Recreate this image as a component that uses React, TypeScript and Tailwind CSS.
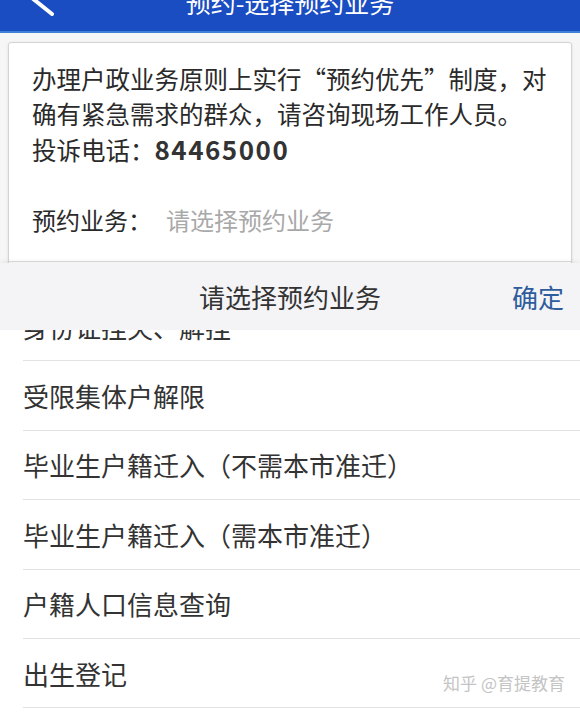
const items = [
  '身份证挂失、解挂',
  '受限集体户解限',
  '毕业生户籍迁入（不需本市准迁）',
  '毕业生户籍迁入（需本市准迁）',
  '户籍人口信息查询',
  '出生登记',
]

const App = () => (
  <div
    className="relative w-[580px] h-[712px] overflow-hidden bg-[#f6f6f6] text-[#2a2a2a]"
    style={{ fontFamily: '"Noto Sans CJK SC", "Noto Sans", sans-serif' }}
  >
    {/* top bar */}
    <header className="relative h-[33px] overflow-hidden bg-[#1a4cc2] border-b-2 border-[#3f7fd6]">
      <svg className="absolute left-[24px] top-[-20px]" width="36" height="38" viewBox="0 0 36 38">
        <path d="M28 2 L8 18 L28 34" stroke="white" strokeWidth="4" fill="none" strokeLinecap="round" />
      </svg>
      <div className="-mt-[14px] text-center text-[25px] leading-[32px] text-white">预约-选择预约业务</div>
    </header>

    {/* form card */}
    <section className="mx-[8px] mt-[9px] rounded-[3px] border border-[#d4d4d4] bg-white shadow-sm">
      <div className="px-[23px] pt-[18px] text-[24.5px] leading-[35px]">
        <p>办理户政业务原则上实行“预约优先”制度，对确有紧急需求的群众，请咨询现场工作人员。</p>
        <p>
          投诉电话：<span className="text-[26px] font-bold tracking-[1.5px] text-[#333]">84465000</span>
        </p>
      </div>
      <div className="flex items-center px-[23px] pt-[35px] pb-[24px] text-[24px] leading-[35px] border-b border-[#dcdcdc]">
        <span>预约业务：</span>
        <span className="ml-[14px] text-[#a9a9a9]">请选择预约业务</span>
      </div>
      <div className="h-[40px]" />
    </section>

    {/* picker sheet */}
    <div className="absolute left-0 right-0 top-[263px] bottom-0 flex flex-col">
      <div className="relative z-10 flex h-[67px] shrink-0 items-center justify-center bg-[#f4f4f6] shadow-[0_-2px_4px_rgba(0,0,0,0.06)]">
        <span className="text-[26px] text-[#333]">请选择预约业务</span>
        <span className="absolute right-[16px] text-[26px] text-[#2f5c9c]">确定</span>
      </div>
      <div className="flex-1 overflow-hidden bg-white">
        <ul className="-mt-[38px]">
          {items.map((t) => (
            <li
              key={t}
              className="ml-[23px] flex h-[69.4px] items-center border-b border-[#e2e2e2] text-[26px] text-[#333]"
            >
              {t}
            </li>
          ))}
        </ul>
      </div>
    </div>

    {/* watermark */}
    <div className="absolute right-[15px] top-[671px] text-[17px] leading-[24px] text-[#c4c4c4] [text-shadow:0_0_2px_#ffffff]">
      知乎 @育提教育
    </div>
  </div>
)

export default App
